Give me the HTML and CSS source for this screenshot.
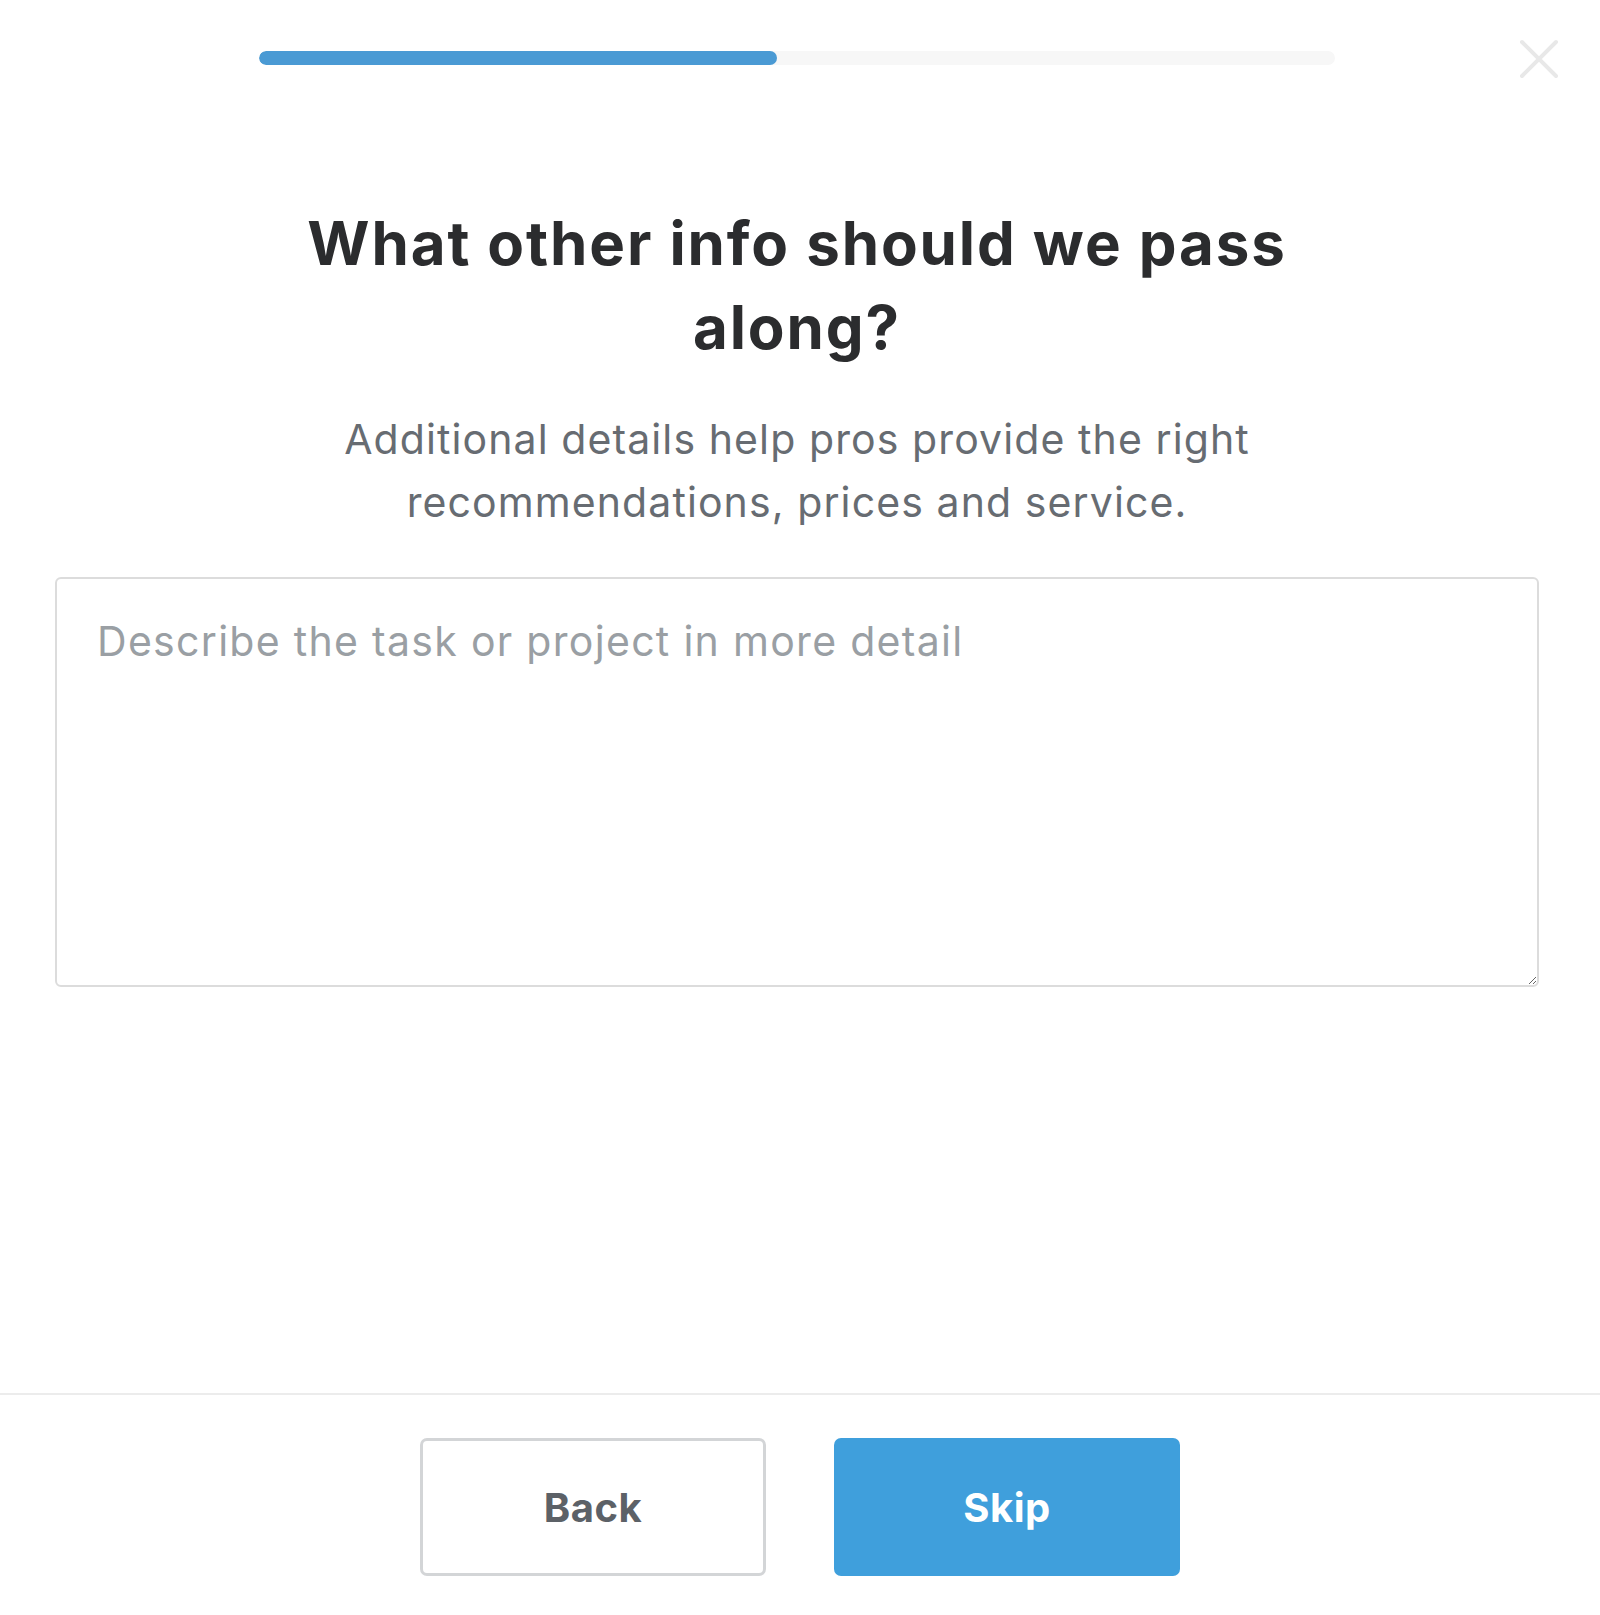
FILE: index.html
```html
<!DOCTYPE html>
<html lang="en">
<head>
<meta charset="utf-8">
<title>What other info should we pass along?</title>
<link rel="stylesheet" href="styles.css">
</head>
<body>
<div class="page">
  <header class="topbar">
    <div class="progress"><div class="progress-fill" style="width: 48.1%"></div></div>
    <button class="close" aria-label="Close">
      <svg viewBox="0 0 40 40" width="40" height="40"><path d="M3 3 L37 37 M37 3 L3 37" stroke="#e8e8e8" stroke-width="4" stroke-linecap="round" fill="none"/></svg>
    </button>
  </header>
  <main class="content">
    <h1 class="title">What other info should we pass along?</h1>
    <p class="subtitle">Additional details help pros provide the right recommendations, prices and service.</p>
    <textarea class="details" placeholder="Describe the task or project in more detail"></textarea>
  </main>
  <footer class="footer">
    <button class="btn btn-back">Back</button>
    <button class="btn btn-skip">Skip</button>
  </footer>
</div>
</body>
</html>
```
FILE: styles.css
```css
* { box-sizing: border-box; }
html, body { margin: 0; padding: 0; background: #fff; }
body { font-family: Inter, Lato, "Noto Sans", sans-serif; }
.page {
  height: 1615px;
  display: flex;
  flex-direction: column;
}
.topbar {
  position: relative;
  padding-top: 51px;
  height: 65px;
}
.progress {
  width: 1076px;
  height: 14px;
  margin: 0 auto;
  background: #f7f7f7;
  border-radius: 7px;
  overflow: hidden;
  position: relative;
  left: -3px;
}
.progress-fill {
  height: 100%;
  background: #4a9ad4;
  border-radius: 7px;
}
.close {
  position: absolute;
  top: 39px;
  right: 41px;
  width: 40px;
  height: 40px;
  padding: 0;
  border: 0;
  background: none;
}
.close svg { display: block; }
.content {
  flex: 1;
  display: flex;
  flex-direction: column;
  align-items: center;
  padding: 0 61px 0 55px;
}
.title {
  margin: 136px 0 0;
  width: 1100px;
  text-align: center;
  font-size: 60px;
  line-height: 84px;
  font-weight: 700;
  letter-spacing: 1.9px;
  color: #2b2c2e;
}
.subtitle {
  margin: 39px 0 0;
  width: 1100px;
  text-align: center;
  font-size: 41px;
  line-height: 63px;
  letter-spacing: 1.1px;
  color: #676c72;
}
.details {
  margin-top: 43px;
  width: 100%;
  height: 410px;
  border: 2px solid #dcdcdc;
  border-radius: 6px;
  padding: 36px 40px;
  font-family: inherit;
  font-size: 41px;
  line-height: 52px;
  letter-spacing: 1.3px;
  color: #2d2f31;
  resize: vertical;
}
.details::placeholder { color: #9a9fa4; }
.footer {
  border-top: 2px solid #ececec;
  height: 222px;
  display: flex;
  justify-content: center;
  align-items: flex-start;
  gap: 68px;
  padding-top: 43px;
}
.btn {
  width: 346px;
  height: 138px;
  border-radius: 7px;
  font-family: inherit;
  font-size: 40px;
  font-weight: 700;
  letter-spacing: 0.5px;
}
.btn-back {
  background: #fff;
  border: 3px solid #d3d5d7;
  color: #5c6167;
}
.btn-skip {
  background: #3f9fdc;
  border: 0;
  color: #fff;
}
```
